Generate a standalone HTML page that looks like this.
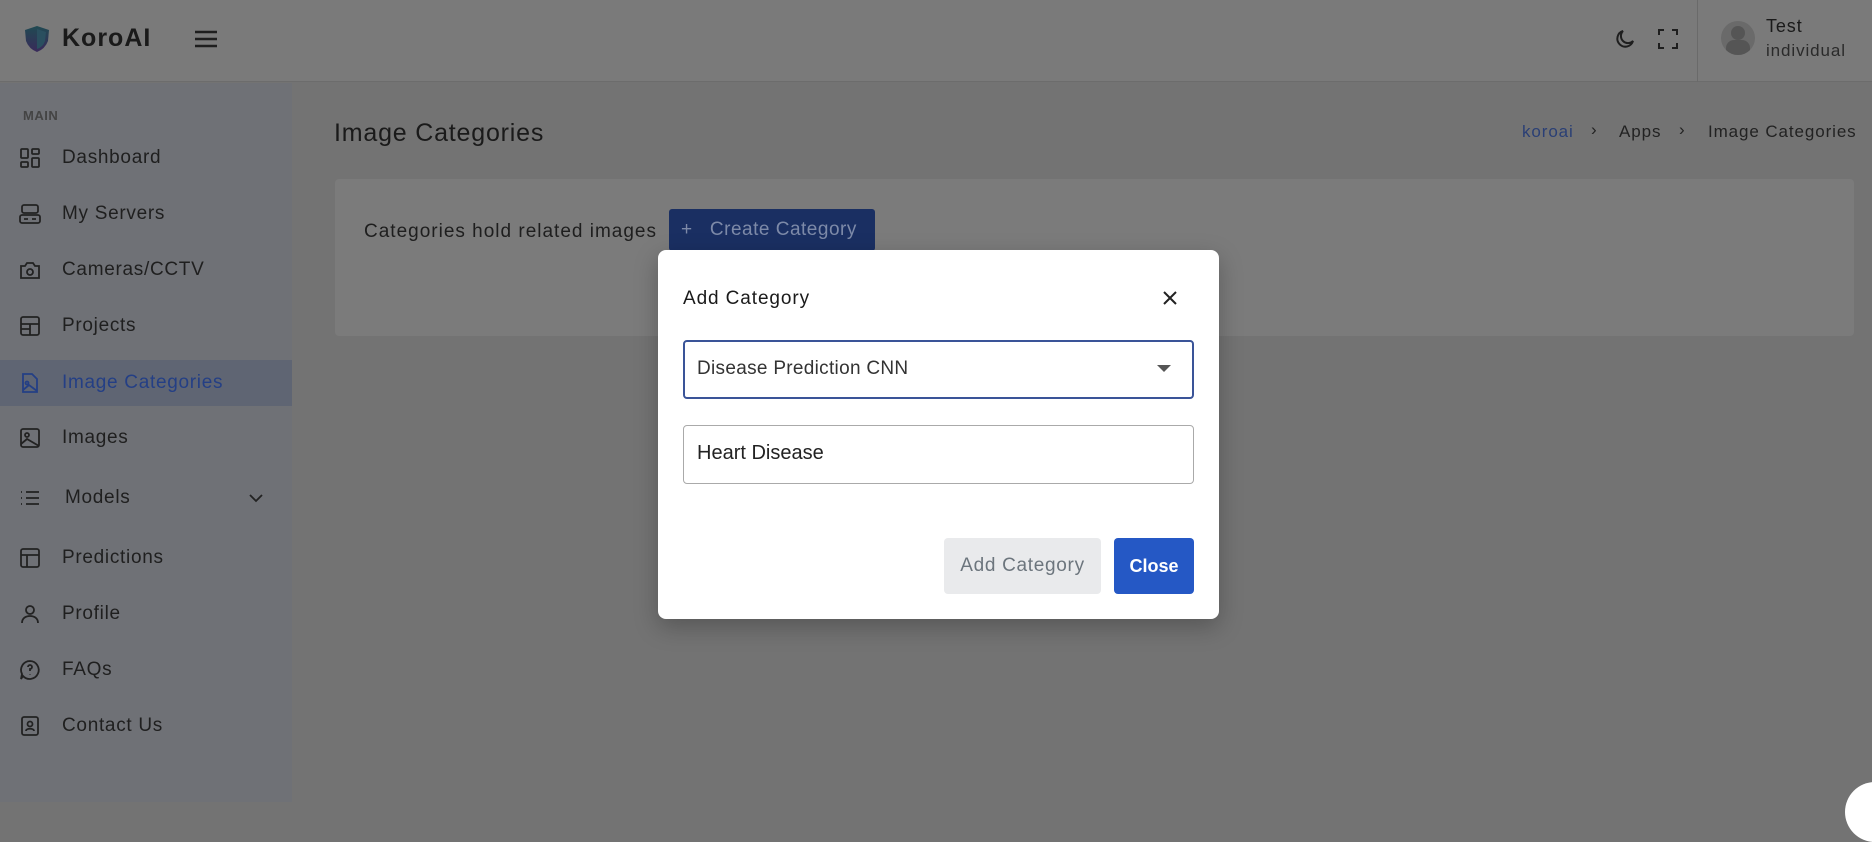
<!DOCTYPE html>
<html><head><meta charset="utf-8"><style>
*{box-sizing:border-box;margin:0;padding:0}
body{width:1872px;height:802px;overflow:hidden;background:#737373;font-family:"Liberation Sans",sans-serif;position:relative;color:#1e1e1e}
.hdr{position:absolute;left:0;top:0;width:1872px;height:82px;background:#7a7a7a;border-bottom:1px solid #6c6c6c}
.side{position:absolute;left:0;top:83px;width:292px;height:719px;background:#6f7176}
.item{position:absolute;left:0;width:292px;height:46px;display:flex;align-items:center;font-size:19px;letter-spacing:0.7px;color:#1f1f1f}
.item svg{position:absolute;left:18px;width:24px;height:24px;fill:none;stroke:#222;stroke-width:1.8}
.item span{position:absolute;left:62px}
.abs{position:absolute}
.ls{letter-spacing:0.9px}
</style></head><body>
<div class="hdr"></div>
<svg class="abs" style="left:24px;top:25px" width="26" height="28" viewBox="0 0 26 28"><defs><linearGradient id="g" x1="0" y1="0" x2="0" y2="1"><stop offset="0" stop-color="#1f4a52"/><stop offset="1" stop-color="#3a2a5a"/></linearGradient></defs><path d="M13 1 L25 5 L24 16 Q21 24 13 27 Q5 24 2 16 L1 5 Z" fill="url(#g)"/><path d="M13 4 L22 7 L21 16 Q19 22 13 24 Z" fill="#2a4f5f"/></svg>
<div class="abs" style="left:62px;top:24px;font-size:25px;font-weight:bold;color:#1a1a1a;letter-spacing:1px">KoroAI</div>
<svg class="abs" style="left:194px;top:29px" width="24" height="20"><path d="M1 3H23M1 10H23M1 17H23" stroke="#1e1e1e" stroke-width="2.4"/></svg>
<svg class="abs" style="left:1613px;top:27px" width="24" height="24" viewBox="0 0 24 24"><path d="M20 14A8 8 0 1 1 10 4 A6.5 6.5 0 0 0 20 14Z" fill="none" stroke="#1e1e1e" stroke-width="2"/></svg>
<svg class="abs" style="left:1656px;top:27px" width="24" height="24" viewBox="0 0 24 24"><path d="M3 8V3H8M16 3H21V8M21 16V21H16M8 21H3V16" fill="none" stroke="#1e1e1e" stroke-width="2"/></svg>
<div class="abs" style="left:1697px;top:0;width:1px;height:82px;background:#6a6a6a"></div>
<div class="abs" style="left:1721px;top:21px;width:34px;height:34px;border-radius:50%;background:#6a6a6a;overflow:hidden"><div class="abs" style="left:10px;top:5px;width:14px;height:14px;border-radius:50%;background:#555"></div><div class="abs" style="left:5px;top:19px;width:24px;height:16px;border-radius:8px 8px 0 0;background:#555"></div></div>
<div class="abs ls" style="left:1766px;top:16px;font-size:18px;color:#1a1a1a">Test</div>
<div class="abs ls" style="left:1766px;top:41px;font-size:17px;color:#2a2a2a">individual</div>

<div class="side">
<div class="abs" style="left:23px;top:25px;font-size:13px;color:#444;font-weight:bold;letter-spacing:0.5px">MAIN</div>
</div>
<div class="item" style="top:135px"><svg viewBox="0 0 24 24"><rect x="3" y="3" width="7" height="9" rx="1"/><rect x="14" y="3" width="7" height="5" rx="1"/><rect x="3" y="16" width="7" height="5" rx="1"/><rect x="14" y="12" width="7" height="9" rx="1"/></svg><span>Dashboard</span></div>
<div class="item" style="top:191px"><svg viewBox="0 0 24 24"><rect x="4" y="3" width="16" height="8" rx="2"/><rect x="2" y="13" width="20" height="8" rx="2"/><path d="M6 17H10M14 17H18"/></svg><span>My Servers</span></div>
<div class="item" style="top:247px"><svg viewBox="0 0 24 24"><path d="M3 8H7L9 5H15L17 8H21V20H3Z"/><circle cx="12" cy="14" r="3"/></svg><span>Cameras/CCTV</span></div>
<div class="item" style="top:303px"><svg viewBox="0 0 24 24"><rect x="3" y="3" width="18" height="18" rx="2"/><path d="M3 10H21M12 10V21M3 15H12"/></svg><span>Projects</span></div>
<div class="item" style="top:360px;background:#5f6573;color:#243f85"><svg viewBox="0 0 24 24" style="stroke:#243f85"><path d="M5 3H14L19 8V21H5Z"/><circle cx="9" cy="12" r="1.5"/><path d="M5 19L11 14L19 20"/></svg><span>Image Categories</span></div>
<div class="item" style="top:415px"><svg viewBox="0 0 24 24"><rect x="3" y="3" width="18" height="18" rx="2"/><circle cx="9" cy="9" r="2"/><path d="M3 18L9 13L21 20"/></svg><span>Images</span></div>
<div class="item" style="top:475px"><svg viewBox="0 0 24 24"><path d="M3 6H4M8 6H21M3 12H4M8 12H21M3 18H4M8 18H21"/></svg><span style="left:65px">Models</span><svg viewBox="0 0 24 24" style="left:244px"><path d="M6 9L12 15L18 9"/></svg></div>
<div class="item" style="top:535px"><svg viewBox="0 0 24 24"><rect x="3" y="3" width="18" height="18" rx="2"/><path d="M3 9H21M9 9V21"/></svg><span>Predictions</span></div>
<div class="item" style="top:591px"><svg viewBox="0 0 24 24"><circle cx="12" cy="8" r="4"/><path d="M4 21C4 16 8 14 12 14S20 16 20 21"/></svg><span>Profile</span></div>
<div class="item" style="top:647px"><svg viewBox="0 0 24 24"><path d="M12 3A9 9 0 1 1 5 18L3 21L4 16A9 9 0 0 1 12 3Z"/><path d="M10 9A2 2 0 1 1 12 11V13M12 16V16.5"/></svg><span>FAQs</span></div>
<div class="item" style="top:703px"><svg viewBox="0 0 24 24"><rect x="4" y="3" width="16" height="18" rx="2"/><circle cx="12" cy="10" r="2.5"/><path d="M8 17C8 14 16 14 16 17"/></svg><span>Contact Us</span></div>

<div class="abs" style="left:334px;top:119px;font-size:25px;color:#1a1a1a;letter-spacing:0.8px">Image Categories</div>
<div class="abs ls" style="left:1522px;top:122px;font-size:17px;color:#2a3f75">koroai</div>
<div class="abs" style="left:1591px;top:120px;font-size:17px;color:#222">›</div>
<div class="abs ls" style="left:1619px;top:122px;font-size:17px;color:#222">Apps</div>
<div class="abs" style="left:1679px;top:120px;font-size:17px;color:#222">›</div>
<div class="abs ls" style="left:1708px;top:122px;font-size:17px;color:#222">Image Categories</div>

<div class="abs" style="left:335px;top:179px;width:1519px;height:157px;background:#7b7b7b;border-radius:4px"></div>
<div class="abs" style="left:364px;top:221px;font-size:19px;color:#1e1e1e;letter-spacing:1px">Categories hold related images</div>
<div class="abs" style="left:669px;top:209px;width:206px;height:42px;background:#1a2f62;border-radius:3px;color:#7d8aa8;font-size:19px;line-height:42px;padding-left:12px;letter-spacing:0.5px">+&nbsp;&nbsp;&nbsp;Create Category</div>

<div class="abs" style="left:658px;top:250px;width:561px;height:369px;background:#fff;border-radius:8px;box-shadow:0 8px 24px rgba(0,0,0,.25)"></div>
<div class="abs" style="left:683px;top:288px;font-size:19px;color:#1a1a1a;letter-spacing:0.9px">Add Category</div>
<svg class="abs" style="left:1161px;top:289px" width="18" height="18"><path d="M3 3L15 15M15 3L3 15" stroke="#222" stroke-width="2"/></svg>
<div class="abs" style="left:683px;top:340px;width:511px;height:59px;border:2px solid #3a5498;border-radius:4px"></div>
<div class="abs" style="left:697px;top:358px;font-size:19px;color:#333;letter-spacing:0.3px">Disease Prediction CNN</div>
<svg class="abs" style="left:1157px;top:365px" width="14" height="8"><path d="M0 0H14L7 7Z" fill="#555"/></svg>
<div class="abs" style="left:683px;top:425px;width:511px;height:59px;border:1.5px solid #aaa;border-radius:4px"></div>
<div class="abs" style="left:697px;top:442px;font-size:20px;color:#222">Heart Disease</div>
<div class="abs" style="left:944px;top:538px;width:157px;height:56px;background:#e9eaec;border-radius:4px;color:#6c757d;font-size:19px;line-height:56px;text-align:center;letter-spacing:0.7px">Add Category</div>
<div class="abs" style="left:1114px;top:538px;width:80px;height:56px;background:#2558c5;border-radius:4px;color:#fff;font-size:18px;font-weight:bold;line-height:56px;text-align:center">Close</div>
<div class="abs" style="left:1845px;top:782px;width:60px;height:60px;border-radius:50%;background:#fff"></div>
</body></html>
